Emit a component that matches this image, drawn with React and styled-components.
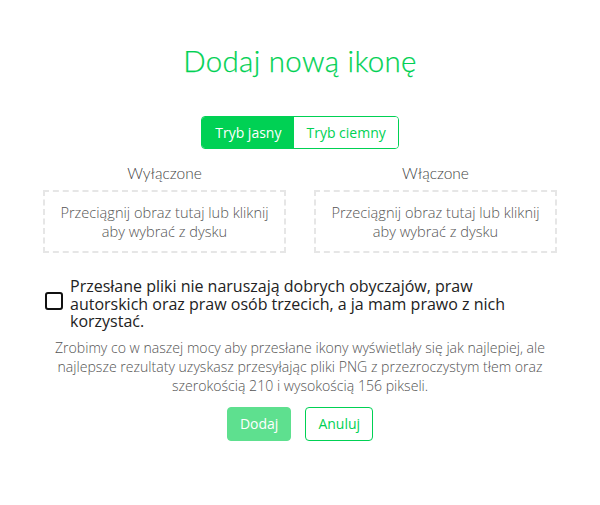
import React from "react";
import styled, { createGlobalStyle } from "styled-components";

const Global = createGlobalStyle`
  html, body { margin: 0; padding: 0; background: #fff; }
  body { font-family: "Open Sans", sans-serif; }
  * { box-sizing: border-box; }
`;

const GREEN = "#00d154";

const Modal = styled.div`
  width: 600px;
  height: 505px;
  background: #fff;
  padding: 43px 43px 0;
  display: flex;
  flex-direction: column;
  align-items: center;
`;

const Title = styled.h1`
  margin: 0;
  font-family: "Lato", sans-serif;
  font-weight: 300;
  font-size: 29.5px;
  line-height: 36px;
  color: ${GREEN};
  letter-spacing: 0.3px;
  -webkit-text-stroke: 0.25px ${GREEN};
`;

const Toggle = styled.div`
  margin-top: 37px;
  display: flex;
  border: 1px solid ${GREEN};
  border-radius: 4px;
  overflow: hidden;
`;

const ToggleBtn = styled.button`
  border: none;
  margin: 0;
  height: 31px;
  padding: 0 ${(p) => (p.$active ? "13px" : "12px")};
  font-family: "Open Sans", sans-serif;
  font-size: 14px;
  background: ${(p) => (p.$active ? GREEN : "#fff")};
  color: ${(p) => (p.$active ? "#fff" : GREEN)};
  cursor: pointer;
`;

const Columns = styled.div`
  align-self: stretch;
  margin-top: 12px;
  display: grid;
  grid-template-columns: 1fr 1fr;
  column-gap: 28px;
`;

const Column = styled.div`
  display: flex;
  flex-direction: column;
  align-items: center;
`;

const Label = styled.div`
  font-family: "Lato", sans-serif;
  font-weight: 300;
  font-size: 15.5px;
  color: #444;
  line-height: 24px;
  margin-bottom: 5px;
`;

const Drop = styled.div`
  align-self: stretch;
  height: 63px;
  border: 2px dashed #e6e6e6;
  display: flex;
  align-items: center;
  justify-content: center;
  text-align: center;
  font-size: 14.6px;
  font-weight: 300;
  line-height: 18.5px;
  color: #555;
`;

const Consent = styled.label`
  align-self: stretch;
  margin-top: 25px;
  padding-left: 2px;
  display: flex;
  align-items: center;
  gap: 7px;
  font-size: 16px;
  line-height: 17.5px;
  color: #222;
`;

const ConsentText = styled.span`
  max-width: 460px;
`;

const Box = styled.span`
  flex: none;
  width: 18px;
  height: 18px;
  margin-bottom: 6px;
  border: 2px solid #111;
  border-radius: 3px;
`;

const Note = styled.p`
  margin: 7px 0 0;
  text-align: center;
  font-size: 14.1px;
  font-weight: 300;
  line-height: 19px;
  color: #555;
`;

const Actions = styled.div`
  margin-top: 12px;
  display: flex;
  gap: 14px;
`;

const Btn = styled.button`
  height: 34px;
  padding: 0 12px;
  border-radius: 4px;
  font-family: "Open Sans", sans-serif;
  font-size: 14px;
  border: 1px solid ${(p) => (p.$primary ? "#5ee08f" : GREEN)};
  background: ${(p) => (p.$primary ? "#5ee08f" : "#fff")};
  color: ${(p) => (p.$primary ? "#fff" : GREEN)};
`;

export default function App() {
  return (
    <>
      <Global />
      <Modal>
        <Title>Dodaj nową ikonę</Title>
        <Toggle>
          <ToggleBtn $active>Tryb jasny</ToggleBtn>
          <ToggleBtn>Tryb ciemny</ToggleBtn>
        </Toggle>
        <Columns>
          <Column>
            <Label>Wyłączone</Label>
            <Drop>
              Przeciągnij obraz tutaj lub kliknij
              <br />
              aby wybrać z dysku
            </Drop>
          </Column>
          <Column>
            <Label>Włączone</Label>
            <Drop>
              Przeciągnij obraz tutaj lub kliknij
              <br />
              aby wybrać z dysku
            </Drop>
          </Column>
        </Columns>
        <Consent>
          <Box />
          <ConsentText>
            Przesłane pliki nie naruszają dobrych obyczajów, praw autorskich oraz praw osób trzecich, a ja mam prawo z
            nich korzystać.
          </ConsentText>
        </Consent>
        <Note>
          Zrobimy co w naszej mocy aby przesłane ikony wyświetlały się jak najlepiej, ale najlepsze rezultaty uzyskasz
          przesyłając pliki PNG z przezroczystym tłem oraz szerokością 210 i wysokością 156 pikseli.
        </Note>
        <Actions>
          <Btn $primary disabled>
            Dodaj
          </Btn>
          <Btn>Anuluj</Btn>
        </Actions>
      </Modal>
    </>
  );
}
